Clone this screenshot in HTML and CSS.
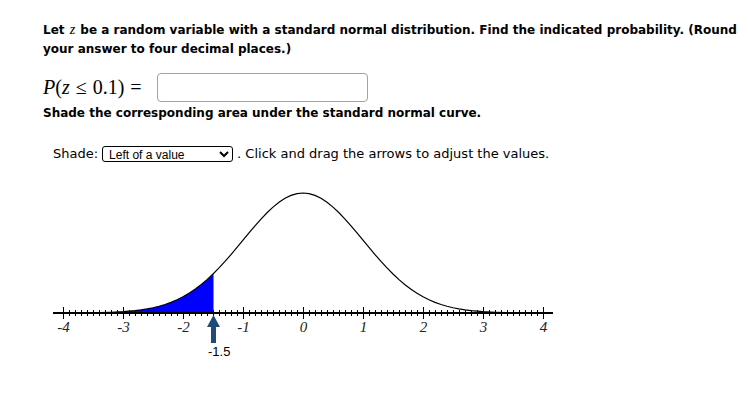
FILE: index.html
```html
<!DOCTYPE html>
<html lang="en">
<head>
<meta charset="utf-8">
<title>Standard normal probability</title>
<link rel="stylesheet" href="styles.css">
</head>
<body>
<main class="page">
  <p class="prompt">Let <i class="mv">z</i> be a random variable with a standard normal distribution. Find the indicated probability. (Round your answer to four decimal places.)</p>
  <div class="answer">
    <span class="math"><i>P</i>(<i>z</i><span class="rel">≤</span>0.1)<span class="rel">=</span></span>
    <input class="answer-box" type="text" aria-label="answer">
  </div>
  <p class="instr">Shade the corresponding area under the standard normal curve.</p>
  <div class="shade-row">
    <span>Shade:</span>
    <select class="shade-select" aria-label="Shade">
      <option>Left of a value</option>
      <option>Right of a value</option>
      <option>Between two values</option>
      <option>Outside two values</option>
    </select>
    <span class="hint">. Click and drag the arrows to adjust the values.</span>
  </div>
  <svg class="graph" viewBox="43 180 520 190" width="520" height="190">
    <polygon class="area" points="63,313 63,312.96 87,312.82 99,312.63 111,312.28 123,311.67 129,311.21 135,310.62 141,309.87 147,308.91 153,307.73 159,306.26 165,304.48 171,302.33 177,299.77 183,296.76 189,293.26 195,289.25 201,284.71 207,279.64 213.5,274.04 213.5,313"/>
    <line class="axis" x1="53" y1="313" x2="553" y2="313"/>
    <line class="minor" x1="63" y1="313" x2="544" y2="313"/>
    <line class="major" x1="63" y1="313" x2="544" y2="313"/>
    <polyline class="curve" points="63,312.96 87,312.82 99,312.63 111,312.28 123,311.67 129,311.21 135,310.62 141,309.87 147,308.91 153,307.73 159,306.26 165,304.48 171,302.33 177,299.77 183,296.76 189,293.26 195,289.25 201,284.71 207,279.64 213,274.04 219,267.96 225,261.45 231,254.59 237,247.47 243,240.22 249,232.96 255,225.86 261,219.08 267,212.77 273,207.10 279,202.23 285,198.28 291,195.38 297,193.60 303,193 309,193.60 315,195.38 321,198.28 327,202.23 333,207.10 339,212.77 345,219.08 351,225.86 357,232.96 363,240.22 369,247.47 375,254.59 381,261.45 387,267.96 393,274.04 399,279.64 405,284.71 411,289.25 417,293.26 423,296.76 429,299.77 435,302.33 441,304.48 447,306.26 453,307.73 459,308.91 465,309.87 471,310.62 477,311.21 483,311.67 495,312.28 507,312.63 519,312.82 543,312.96"/>
    <g class="tick-labels">
      <text x="63.5" y="332">-4</text>
      <text x="123.5" y="332">-3</text>
      <text x="183.5" y="332">-2</text>
      <text x="243.5" y="332">-1</text>
      <text x="303.5" y="332">0</text>
      <text x="363.5" y="332">1</text>
      <text x="423.5" y="332">2</text>
      <text x="483.5" y="332">3</text>
      <text x="543.5" y="332">4</text>
    </g>
    <polygon class="arrow" points="213.5,315 207,327 211,327 211,343 216,343 216,327 220,327"/>
    <text class="arrow-label" x="208" y="356">-1.5</text>
  </svg>
</main>
</body>
</html>
```

FILE: styles.css
```css
html, body {
  margin: 0;
  padding: 0;
  background: #fff;
}

body {
  font-family: "DejaVu Sans", Verdana, sans-serif;
  color: #000;
  font-size: 12px;
}

.page {
  padding: 20px 0 0 43px;
}

.prompt {
  margin: 0;
  width: 700px;
  font-weight: 700;
  line-height: 19px;
}

.mv {
  margin: 0 1px;
  font-family: "Liberation Serif", serif;
  font-style: italic;
  font-weight: 400;
  font-size: 14px;
}

.answer {
  display: flex;
  align-items: center;
  margin-top: 14px;
  height: 29px;
}

.math {
  font-family: "Liberation Serif", serif;
  font-size: 20px;
  white-space: nowrap;
}

.rel {
  margin: 0 6px;
}

.answer-box {
  margin: 0 0 0 9px;
  width: 211px;
  height: 29px;
  box-sizing: border-box;
  border: 1px solid #a3a3a3;
  border-radius: 4px;
  background: #fff;
}

.instr {
  margin: 2px 0 0;
  font-weight: 700;
  line-height: 19px;
}

.shade-row {
  display: flex;
  align-items: center;
  margin-top: 21px;
  padding-left: 10px;
  height: 19px;
  line-height: 19px;
  font-size: 13px;
}

.shade-select {
  margin: 0 4px 0 4px;
  width: 131px;
  height: 16px;
  padding: 0 0 0 2px;
  font-family: "Liberation Sans", Arial, sans-serif;
  font-size: 12px;
  color: #000;
  border: 1.5px solid #000;
  border-radius: 3px;
  background: #fff;
}

.graph {
  display: block;
  margin-top: 17px;
}

.area {
  fill: #0000ff;
}

.axis {
  stroke: #000;
  stroke-width: 2;
}

.minor {
  stroke: #000;
  stroke-width: 6;
  stroke-dasharray: 1 5;
}

.major {
  stroke: #000;
  stroke-width: 12;
  stroke-dasharray: 1 59;
}

.curve {
  fill: none;
  stroke: #000;
  stroke-width: 1.2;
}

.tick-labels text {
  font-family: "Liberation Serif", serif;
  font-style: italic;
  font-size: 15px;
  text-anchor: middle;
  fill: #222;
}

.arrow {
  fill: #1f4b78;
}

.arrow-label {
  font-family: "Liberation Sans", Arial, sans-serif;
  font-size: 13px;
  fill: #000;
}
```
